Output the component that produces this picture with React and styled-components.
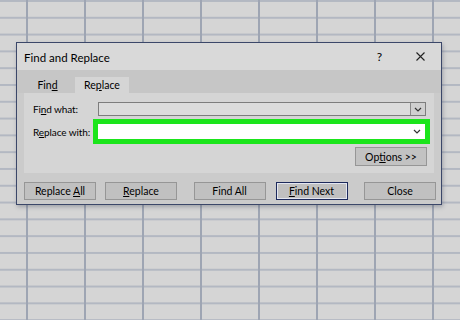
import styled, { createGlobalStyle } from "styled-components";

const GlobalStyle = createGlobalStyle`
  body {
    margin: 0;
    background: #d6d6d6;
    font-family: Lato, "Liberation Sans", sans-serif;
  }
`;

const Sheet = styled.div`
  position: relative;
  width: 460px;
  height: 320px;
  overflow: hidden;
  background-color: #d5d5d5;
  background-image: linear-gradient(to right, #9ea5b3 2px, transparent 2px),
    linear-gradient(to bottom, #b3b8c2 2px, transparent 2px);
  background-size: 58px 100%, 100% 16.8px;
  background-position: 26px 0, 0 0;
`;

const Dialog = styled.div`
  position: absolute;
  left: 16px;
  top: 42px;
  width: 426px;
  height: 163px;
  box-sizing: border-box;
  border: 1px solid #3b4769;
  background: #cbcbcb;
  box-shadow: 1px 2px 4px rgba(60, 70, 90, 0.35);
  display: flex;
  flex-direction: column;
  color: #000;
`;

const TitleBar = styled.div`
  height: 27px;
  flex: none;
  display: flex;
  align-items: center;
  padding: 0 16px 0 7px;
  background: #d9d9d9;
`;

const Title = styled.div`
  flex: 1;
  font-size: 11.5px;
  padding-top: 1px;
`;

const HelpMark = styled.span`
  font-size: 12px;
  margin-right: 34px;
`;

const TabStrip = styled.div`
  height: 23px;
  flex: none;
  display: flex;
  align-items: flex-end;
  padding-left: 7px;
  background: #c6c6c6;
`;

const Tab = styled.div`
  height: 16px;
  display: flex;
  align-items: center;
  justify-content: center;
  width: ${(p) => p.$w}px;
  margin-right: 4px;
  font-size: 10.5px;
  background: ${(p) => (p.$active ? "#d5d5d5" : "transparent")};
`;

const Panel = styled.div`
  margin: 0 7px;
  height: 80px;
  flex: none;
  box-sizing: border-box;
  padding: 9px 8px 0 9px;
  background: #d5d5d5;
  display: grid;
  grid-template-columns: 65px 1fr;
  grid-template-rows: 14px 15px 19px;
  row-gap: 8px;
  align-items: center;
`;

const Label = styled.div`
  font-size: 10px;
  letter-spacing: -0.1px;
  white-space: nowrap;
`;

const Combo = styled.div`
  height: ${(p) => (p.$highlight ? 15 : 14)}px;
  box-sizing: border-box;
  display: flex;
  align-items: stretch;
  justify-content: flex-end;
  border: 1px solid ${(p) => (p.$highlight ? "#ffffff" : "#7d7d7d")};
  background: ${(p) => (p.$highlight ? "#ffffff" : "#dcdcdc")};
  outline: ${(p) => (p.$highlight ? "5px solid #1be51b" : "none")};
  margin-right: ${(p) => (p.$highlight ? 1 : 0)}px;
`;

const DropButton = styled.div`
  width: 14px;
  display: flex;
  align-items: center;
  justify-content: center;
  border-left: 1px solid ${(p) => (p.$plain ? "#ffffff" : "#8a8a8a")};
  background: ${(p) => (p.$plain ? "#ffffff" : "#cfcfcf")};
`;

const OptionsButton = styled.button`
  grid-column: 2;
  justify-self: end;
  width: 72px;
  height: 19px;
  margin-right: -1px;
  padding: 0;
  font-family: inherit;
  font-size: 10.5px;
  color: #000;
  background: #c2c2c2;
  border: 1px solid #969696;
`;

const ButtonRow = styled.div`
  flex: 1;
  display: flex;
  justify-content: space-between;
  align-items: flex-start;
  padding: 9px 5px 0 7px;
`;

const Group = styled.div`
  display: flex;
  gap: ${(p) => p.$gap}px;
`;

const Button = styled.button`
  width: 72px;
  height: 18px;
  padding: 0;
  font-family: inherit;
  font-size: 10.5px;
  color: #000;
  background: #c0c0c0;
  border: 1px solid ${(p) => (p.$default ? "#1d2a5c" : "#969696")};
  box-shadow: ${(p) => (p.$default ? "inset 0 0 0 1px #e3e6f0" : "none")};
`;

const Key = styled.span`
  text-decoration: underline;
  text-underline-offset: 1px;
`;

const Chevron = () => (
  <svg width="8" height="5" viewBox="0 0 8 5">
    <polyline points="1,1 4,4 7,1" fill="none" stroke="#333" strokeWidth="1.2" />
  </svg>
);

const CloseIcon = () => (
  <svg width="9" height="9" viewBox="0 0 9 9">
    <path d="M0.5 0.5 L8.5 8.5 M8.5 0.5 L0.5 8.5" stroke="#222" strokeWidth="1.1" />
  </svg>
);

export default function App() {
  return (
    <>
      <GlobalStyle />
      <Sheet>
        <Dialog>
          <TitleBar>
            <Title>Find and Replace</Title>
            <HelpMark>?</HelpMark>
            <CloseIcon />
          </TitleBar>
          <TabStrip>
            <Tab $w={47}>
              Fin<Key>d</Key>
            </Tab>
            <Tab $w={54} $active>
              Re<Key>p</Key>lace
            </Tab>
          </TabStrip>
          <Panel>
            <Label>
              Fi<Key>n</Key>d what:
            </Label>
            <Combo>
              <DropButton>
                <Chevron />
              </DropButton>
            </Combo>
            <Label>
              R<Key>e</Key>place with:
            </Label>
            <Combo $highlight>
              <DropButton $plain>
                <Chevron />
              </DropButton>
            </Combo>
            <OptionsButton>
              Op<Key>t</Key>ions &gt;&gt;
            </OptionsButton>
          </Panel>
          <ButtonRow>
            <Group $gap={9}>
              <Button>
                Replace <Key>A</Key>ll
              </Button>
              <Button>
                <Key>R</Key>eplace
              </Button>
            </Group>
            <Group $gap={10}>
              <Button>Find All</Button>
              <Button $default>
                <Key>F</Key>ind Next
              </Button>
            </Group>
            <Group $gap={0}>
              <Button>Close</Button>
            </Group>
          </ButtonRow>
        </Dialog>
      </Sheet>
    </>
  );
}
